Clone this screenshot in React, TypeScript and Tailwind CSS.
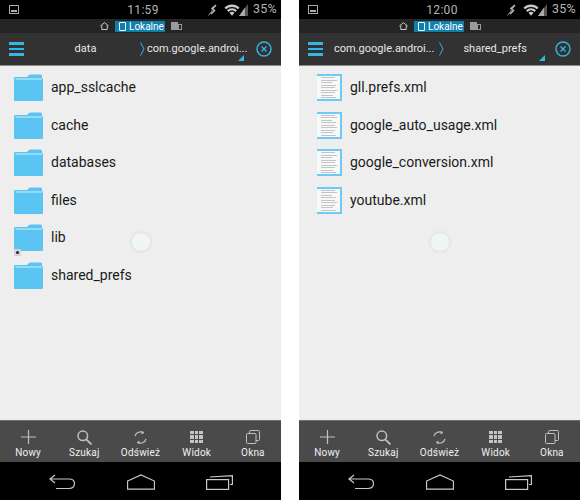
import React from "react";

const Folder = ({ link }: { link?: boolean }) => (
  <div className="relative h-[27px] w-[29px] shrink-0">
    <svg width="29" height="27" viewBox="0 0 29 27">
      <path d="M0 4 Q0 3 1 3 L13 3 L15 1 Q15.500 0.500 16.500 0.500 L26.500 0.500 Q28 0.500 28 2 L28 4 Q29 4 29 5 V26 Q29 27 28 27 H1 Q0 27 0 26 Z" fill="#5ac4f3" />
      <path d="M1.500 5 H28" stroke="#b8e6fb" strokeWidth="1.300" />
    </svg>
    {link && (
      <div className="absolute bottom-[-5px] left-0 flex h-[7px] w-[7px] items-center justify-center rounded-[1px] bg-[#d4d4d4]">
        <div className="h-[3px] w-[3px] rounded-full bg-[#222]" />
      </div>
    )}
  </div>
);

const XmlFile = () => (
  <div className="flex h-[27px] w-[25px] shrink-0 flex-col justify-center gap-[1.500px] border-y-[2px] border-r-[2px] border-[#6ccaf4] bg-[#f8f8f8] pl-[4px] pr-[3px]">
    {[85, 100, 70, 95, 85, 100, 90, 75, 95].map((w, i) => (
      <div key={i} className="h-px bg-[#c4c4c4]" style={{ width: `${w}%` }} />
    ))}
  </div>
);

const Menu = () => (
  <div className="flex w-[15px] shrink-0 flex-col gap-[3px]">
    <div className="h-[2.500px] bg-[#33b5e5]" />
    <div className="h-[2.500px] bg-[#33b5e5]" />
    <div className="h-[2.500px] bg-[#33b5e5]" />
  </div>
);

const CloseCircle = () => (
  <svg width="16" height="16" viewBox="0 0 16 16" fill="none" stroke="#33b5e5" strokeWidth="1.400" className="shrink-0">
    <circle cx="8" cy="8" r="7" />
    <path d="M5.500 5.500 L10.500 10.500 M10.500 5.500 L5.500 10.500" />
  </svg>
);

const Chevron = () => (
  <svg width="5" height="14" viewBox="0 0 5 14" fill="none" stroke="#33b5e5" strokeWidth="1" className="shrink-0">
    <path d="M0.500 0.500 L4 7 L0.500 13.500" />
  </svg>
);

const Corner = () => (
  <svg width="6" height="6" viewBox="0 0 6 6" className="block">
    <path d="M6 0 V6 H0 Z" fill="#33b5e5" />
  </svg>
);

const StatusBar = ({ time }: { time: string }) => (
  <div className="flex h-[19px] items-center bg-black text-[#b4b4b4]">
    <div className="ml-[9px] flex h-[9px] w-[10px] items-end border border-[#aaa] p-px">
      <div className="h-[2px] w-full bg-[#aaa]" />
    </div>
    <div className="ml-[107px] w-[34px] text-center text-[12px] tracking-[0.3px]">{time}</div>
    <svg width="10" height="12" viewBox="0 0 10 12" className="ml-[48px]" fill="none" stroke="#b4b4b4" strokeWidth="1.600">
      <path d="M8 1 L4 4.500 L6.500 6.500 L3 10" />
      <path d="M0.500 11.500 L7.500 2" strokeWidth="0.800" />
    </svg>
    <svg width="16" height="12" viewBox="0 0 17 12" className="ml-[6px]">
      <path d="M0.500 3.500 A11 11 0 0 1 16.500 3.500 L14.800 5.300 A9 9 0 0 0 2.200 5.300 Z" fill="#c8c8c8" />
      <path d="M3.200 6.300 A7.500 7.500 0 0 1 13.800 6.300 L12.200 8 A5.500 5.500 0 0 0 4.800 8 Z" fill="#c8c8c8" />
      <path d="M5.800 9 A3.500 3.500 0 0 1 11.200 9 L8.500 12 Z" fill="#c8c8c8" />
    </svg>
    <svg width="9" height="12" viewBox="0 0 9 12" className="ml-[-1px]">
      <path d="M9 0 V12 H0 Z" fill="#555" />
      <path d="M6 3.500 V12 H0 Z" fill="#aaa" />
    </svg>
    <span className="ml-[5px] text-[12.500px] tracking-[0.2px]">35%</span>
  </div>
);

const LocationBar = () => (
  <div className="flex h-[14px] items-center bg-[#252525] pl-[100px]">
    <svg width="9" height="8" viewBox="0 0 9 8" fill="none" stroke="#ddd" strokeWidth="0.900" className="mr-[6px] shrink-0">
      <path d="M0.400 4 L4.500 0.600 L8.600 4 M1.800 3.400 V7.500 H7.200 V3.400" />
    </svg>
    <div className="flex h-[11px] w-[50px] items-center gap-[3px] bg-[#0f7fae] pl-[4px] text-[10px] whitespace-nowrap text-white">
      <div className="h-[9px] w-[7px] shrink-0 rounded-[1px] border border-white" />
      <span>Lokalne</span>
    </div>
    <div className="ml-[6px] flex items-end">
      <div className="h-[8px] w-[7px] bg-[#9a9a9a]" />
      <div className="h-[6px] w-[4px] border border-[#9a9a9a]" />
    </div>
  </div>
);

const ToolItem = ({ label, icon }: { label: string; icon: React.ReactNode }) => (
  <div className="flex flex-1 flex-col items-center">
    <div className="flex h-[20px] items-center justify-center">{icon}</div>
    <span className="text-[10px] leading-[12px] tracking-[0.2px] text-[#f0f0f0]">{label}</span>
  </div>
);

const stroke = "#c0c0c0";
const icons = {
  plus: (
    <svg width="15" height="14" viewBox="0 0 15 14" stroke={stroke} strokeWidth="1.200">
      <path d="M7.500 0 V14 M0 7 H15" />
    </svg>
  ),
  search: (
    <svg width="15" height="15" viewBox="0 0 15 15" fill="none" stroke={stroke} strokeWidth="1.500">
      <circle cx="5.800" cy="5.800" r="4.800" />
      <path d="M9.300 9.300 L14.500 14.500" strokeWidth="1.800" />
    </svg>
  ),
  refresh: (
    <svg width="13" height="13" viewBox="0 0 13 13" fill="none" stroke={stroke} strokeWidth="1.200">
      <path d="M1 5 A5.700 5.700 0 0 1 8.500 1.200" />
      <path d="M12 8 A5.700 5.700 0 0 1 4.500 11.800" />
      <path d="M8 0 L10 1.800 L7.800 3 Z" fill={stroke} strokeWidth="0.500" />
      <path d="M5 13 L3 11.200 L5.200 10 Z" fill={stroke} strokeWidth="0.500" />
    </svg>
  ),
  grid: (
    <div className="grid grid-cols-3 gap-px">
      {Array.from({ length: 9 }).map((_, i) => (
        <div key={i} className="h-[3.500px] w-[3.500px] bg-[#c4c4c4]" />
      ))}
    </div>
  ),
  windows: (
    <svg width="14" height="14" viewBox="0 0 14 14" fill="none" stroke={stroke} strokeWidth="1">
      <rect x="0.500" y="3.500" width="9.500" height="10" rx="1" />
      <path d="M3.500 3.500 V1.800 Q3.500 0.500 4.800 0.500 H12.500 Q13.500 0.500 13.500 1.500 V9.500 Q13.500 10.500 12.500 10.500 H10" />
    </svg>
  ),
};

const Phone = ({
  time,
  header,
  rows,
}: {
  time: string;
  header: React.ReactNode;
  rows: { name: string; icon: React.ReactNode }[];
}) => (
  <div className="flex h-[500px] w-[281px] flex-col bg-[#eeeeee] font-['Roboto',sans-serif]">
    <StatusBar time={time} />
    <LocationBar />
    <div className="flex h-[33px] items-center border-b-[1px] border-[#8c8c8c] bg-[#323232] pl-[9px] pr-[9px] text-[11px] text-[#e8e8e8]">
      <Menu />
      {header}
      <CloseCircle />
    </div>
    <div className="relative flex-1 pl-[14px] pt-[3px]">
      {rows.map((r) => (
        <div key={r.name} className="flex h-[37.500px] items-center">
          <div className="flex w-[37px] shrink-0">{r.icon}</div>
          <span className="text-[14px] text-[#1a1a1a]">{r.name}</span>
        </div>
      ))}
      <div className="absolute left-[131px] top-[166px] h-[20px] w-[20px] rounded-full border border-[#e6e6e6] bg-[#f0f5f6] shadow-[0_0_3px_#dcdcdc]" />
    </div>
    <div className="flex h-[42px] border-t border-[#6e6e6e] bg-[#4a4a4a] pt-[6px]">
      <ToolItem label="Nowy" icon={icons.plus} />
      <ToolItem label="Szukaj" icon={icons.search} />
      <ToolItem label="Odśwież" icon={icons.refresh} />
      <ToolItem label="Widok" icon={icons.grid} />
      <ToolItem label="Okna" icon={icons.windows} />
    </div>
    <div className="flex h-[38px] items-center bg-black pl-[49px] pt-[2px]">
      <svg width="26" height="16" viewBox="0 0 26 16" fill="none" stroke="#c8c8c8" strokeWidth="1.200" className="shrink-0">
        <path d="M6 1 L1 5 L6 9 M1 5 H20 Q25.500 5 25.500 9.500 Q25.500 14.500 20 14.500 H7" />
      </svg>
      <svg width="28" height="16" viewBox="0 0 29 16" fill="none" stroke="#c8c8c8" strokeWidth="1.200" className="ml-[52px] shrink-0">
        <path d="M0.600 7 L14.500 0.700 L28.400 7 V15.400 H0.600 Z" />
      </svg>
      <svg width="27" height="15" viewBox="0 0 27 15" fill="none" stroke="#c8c8c8" strokeWidth="1.200" className="ml-[51px] shrink-0">
        <rect x="0.600" y="4.600" width="22" height="9.800" />
        <path d="M4 2 L26.400 0.700 V9.500 H24" />
      </svg>
    </div>
  </div>
);

const LeftHeader = () => (
  <div className="relative flex h-full min-w-0 flex-1 items-center">
    <span className="ml-[39.500px] w-[44px] text-center">data</span>
    <div className="ml-[32.500px]"><Chevron /></div>
    <span className="ml-[2px] whitespace-nowrap">com.google.androi...</span>
    <div className="absolute right-[12px] top-[22px]"><Corner /></div>
  </div>
);

const RightHeader = () => (
  <div className="relative flex h-full min-w-0 flex-1 items-center">
    <span className="ml-[11px] whitespace-nowrap">com.google.androi...</span>
    <div className="ml-[5px]"><Chevron /></div>
    <span className="ml-[19px] whitespace-nowrap">shared_prefs</span>
    <div className="absolute right-[10px] top-[22px]"><Corner /></div>
  </div>
);

export default function App() {
  const folders = ["app_sslcache", "cache", "databases", "files", "lib", "shared_prefs"];
  const files = ["gll.prefs.xml", "google_auto_usage.xml", "google_conversion.xml", "youtube.xml"];
  return (
    <div className="flex h-[500px] w-[580px] justify-between overflow-hidden bg-white">
      <Phone
        time="11:59"
        header={<LeftHeader />}
        rows={folders.map((n) => ({ name: n, icon: <Folder link={n === "lib"} /> }))}
      />
      <Phone
        time="12:00"
        header={<RightHeader />}
        rows={files.map((n) => ({ name: n, icon: <div className="pl-[4px]"><XmlFile /></div> }))}
      />
    </div>
  );
}
